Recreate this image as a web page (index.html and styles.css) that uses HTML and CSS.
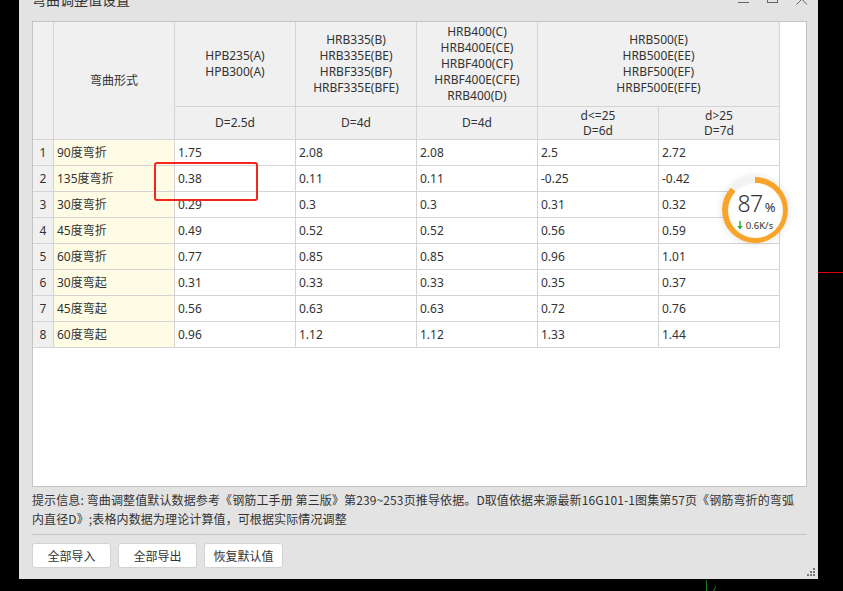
FILE: index.html
```html
<!DOCTYPE html>
<html lang="zh-CN">
<head>
<meta charset="utf-8">
<title>弯曲调整值设置</title>
<link rel="stylesheet" href="styles.css">
</head>
<body>
<div class="desktop">
  <div class="dialog">
    <div class="titlebar">
      <span class="title">弯曲调整值设置</span>
      <div class="winctrls">
        <svg class="wc" width="12" height="14" viewBox="0 0 12 14"><path d="M0 10.5H11" stroke="#666" stroke-width="1" fill="none"/></svg>
        <svg class="wc" width="12" height="14" viewBox="0 0 12 14"><rect x="0.5" y="0.5" width="10" height="10" stroke="#666" stroke-width="1" fill="none"/></svg>
        <svg class="wc" width="12" height="14" viewBox="0 0 12 14"><path d="M0.5 2L11 12.5M11 2L0.5 12.5" stroke="#666" stroke-width="1" fill="none"/></svg>
      </div>
    </div>
    <div class="grid-box">
      <table class="grid">
        <colgroup>
          <col class="c-num"><col class="c-w"><col class="c-w"><col class="c-w"><col class="c-w"><col class="c-w"><col class="c-w">
        </colgroup>
        <thead>
          <tr class="h1">
            <th rowspan="2" class="hn"></th>
            <th rowspan="2">弯曲形式</th>
            <th>HPB235(A)<br>HPB300(A)</th>
            <th>HRB335(B)<br>HRB335E(BE)<br>HRBF335(BF)<br>HRBF335E(BFE)</th>
            <th>HRB400(C)<br>HRB400E(CE)<br>HRBF400(CF)<br>HRBF400E(CFE)<br>RRB400(D)</th>
            <th colspan="2">HRB500(E)<br>HRB500E(EE)<br>HRBF500(EF)<br>HRBF500E(EFE)</th>
          </tr>
          <tr class="h2">
            <th>D=2.5d</th>
            <th>D=4d</th>
            <th>D=4d</th>
            <th class="two">d&lt;=25<br>D=6d</th>
            <th class="two">d&gt;25<br>D=7d</th>
          </tr>
        </thead>
        <tbody>
          <tr><td class="n">1</td><td class="name">90度弯折</td><td>1.75</td><td>2.08</td><td>2.08</td><td>2.5</td><td>2.72</td></tr>
          <tr><td class="n">2</td><td class="name">135度弯折</td><td>0.38</td><td>0.11</td><td>0.11</td><td>-0.25</td><td>-0.42</td></tr>
          <tr><td class="n">3</td><td class="name">30度弯折</td><td>0.29</td><td>0.3</td><td>0.3</td><td>0.31</td><td>0.32</td></tr>
          <tr><td class="n">4</td><td class="name">45度弯折</td><td>0.49</td><td>0.52</td><td>0.52</td><td>0.56</td><td>0.59</td></tr>
          <tr><td class="n">5</td><td class="name">60度弯折</td><td>0.77</td><td>0.85</td><td>0.85</td><td>0.96</td><td>1.01</td></tr>
          <tr><td class="n">6</td><td class="name">30度弯起</td><td>0.31</td><td>0.33</td><td>0.33</td><td>0.35</td><td>0.37</td></tr>
          <tr><td class="n">7</td><td class="name">45度弯起</td><td>0.56</td><td>0.63</td><td>0.63</td><td>0.72</td><td>0.76</td></tr>
          <tr><td class="n">8</td><td class="name">60度弯起</td><td>0.96</td><td>1.12</td><td>1.12</td><td>1.33</td><td>1.44</td></tr>
        </tbody>
      </table>
    </div>
    <p class="hint">提示信息: 弯曲调整值默认数据参考《钢筋工手册 第三版》第239~253页推导依据。D取值依据来源最新16G101-1图集第57页《钢筋弯折的弯弧内直径D》;表格内数据为理论计算值，可根据实际情况调整</p>
    <div class="sep"></div>
    <div class="buttons">
      <button class="btn">全部导入</button>
      <button class="btn">全部导出</button>
      <button class="btn">恢复默认值</button>
    </div>
    <div class="grip">
      <svg width="8" height="8" viewBox="0 0 8 8"><g fill="#777"><rect x="6" y="0" width="2" height="2"/><rect x="3" y="3" width="2" height="2"/><rect x="6" y="3" width="2" height="2"/><rect x="0" y="6" width="2" height="2"/><rect x="3" y="6" width="2" height="2"/><rect x="6" y="6" width="2" height="2"/></g></svg>
    </div>
  </div>

  <div class="mark"></div>

  <div class="speed">
    <div class="speed-inner">
      <div class="pct"><span class="num">87</span><span class="sym">%</span></div>
      <div class="rate">
        <svg class="arrow" width="6" height="9" viewBox="0 0 6 9"><path d="M3 0V7.5" stroke="#17b33a" stroke-width="1.4" fill="none"/><path d="M0.3 5L3 8.6L5.7 5Z" fill="#17b33a"/></svg>
        <span>0.6K/s</span>
      </div>
    </div>
  </div>

  <div class="redline"></div>
  <div class="greenline"></div>
  <div class="greenslash"></div>
</div>
</body>
</html>
```

FILE: styles.css
```css
html, body {
  margin: 0;
  padding: 0;
  background: #000;
  width: 843px;
  height: 591px;
  overflow: hidden;
}

.desktop {
  position: relative;
  width: 843px;
  height: 591px;
  overflow: hidden;
  font-family: "Noto Sans", "Noto Sans CJK SC", sans-serif;
  font-size: 12px;
  color: #333;
}

.dialog {
  position: relative;
  margin-top: -14px;
  margin-left: 19px;
  width: 799px;
  height: 593px;
  box-sizing: border-box;
  padding: 0 11px 0 13px;
  background: #e3e3e3;
  display: flex;
  flex-direction: column;
}

.titlebar {
  height: 35px;
  display: flex;
  align-items: flex-start;
}

.title {
  font-family: "Noto Sans CJK SC", sans-serif;
  font-size: 14px;
  line-height: 26px;
  color: #333;
}

.winctrls {
  margin-left: auto;
  margin-right: -1px;
  display: flex;
  gap: 17px;
  padding-top: 6px;
}

.wc {
  display: block;
}

.grid-box {
  height: 466px;
  box-sizing: border-box;
  border: 1px solid #c4c4c4;
  background: #fff;
}

.grid {
  border-collapse: separate;
  border-spacing: 0;
  table-layout: fixed;
  width: 747px;
}

.c-num { width: 21px; }
.c-w { width: 121px; }

.grid th,
.grid td {
  padding: 0;
  border-right: 1px solid #d4d4d4;
  border-bottom: 1px solid #d4d4d4;
  font-weight: normal;
  line-height: 16px;
  white-space: nowrap;
  overflow: hidden;
}

.grid th {
  background: #f0f0f0;
  text-align: center;
  color: #333;
}

.grid tr.h1 { height: 85px; }
.grid tr.h2 { height: 33px; }
.grid tr.h2 th.two { line-height: 15px; }
.grid tbody tr { height: 26px; }

.grid td {
  padding-left: 3px;
  text-align: left;
}

.grid td.n {
  background: #f0f0f0;
  padding-left: 0;
  text-align: center;
}

.grid td.name {
  background: #fffce6;
}

.hint {
  margin: 3px 0 0 0;
  width: 770px;
  line-height: 19px;
  font-family: "Noto Sans CJK SC", sans-serif;
  font-size: 12px;
  letter-spacing: 0.12px;
  color: #333;
}

.sep {
  margin-top: 6px;
  height: 1px;
  background: #c4c4c4;
}

.buttons {
  margin-top: 8px;
  display: flex;
  gap: 7px;
}

.btn {
  width: 79px;
  height: 25px;
  box-sizing: border-box;
  border: 1px solid #d2d2d2;
  border-radius: 3px;
  background: #fff;
  font-family: "Noto Sans CJK SC", sans-serif;
  font-size: 12px;
  color: #333;
  padding: 0;
  margin: 0;
}

.grip {
  position: absolute;
  right: 3px;
  bottom: 3px;
  width: 8px;
  height: 8px;
}
.grip svg { display: block; }

.mark {
  position: absolute;
  left: 154px;
  top: 162px;
  width: 104px;
  height: 39px;
  box-sizing: border-box;
  border: 2px solid #f2261f;
  border-radius: 3px;
}

.speed {
  position: absolute;
  left: 722px;
  top: 177px;
  width: 66px;
  height: 66px;
  border-radius: 50%;
  background: conic-gradient(#f8a42a 0deg 313deg, #f2f2f2 313deg 360deg);
  box-shadow: 0 0 6px 2px rgba(0, 0, 0, 0.08);
  display: flex;
  align-items: center;
  justify-content: center;
}

.speed-inner {
  width: 55px;
  height: 55px;
  border-radius: 50%;
  background: radial-gradient(circle, #fff 62%, #fff6e8 85%, #fde9cc 100%);
  display: flex;
  flex-direction: column;
  align-items: center;
  justify-content: center;
}

.pct {
  display: flex;
  align-items: baseline;
  margin-top: 2px;
  margin-left: 3px;
  line-height: 24px;
}

.num {
  font-family: "Noto Sans", sans-serif;
  font-weight: 300;
  font-size: 23px;
  color: #333;
  letter-spacing: -0.5px;
}

.sym {
  font-family: "Noto Sans", sans-serif;
  font-size: 13px;
  color: #333;
  margin-left: 2px;
}

.rate {
  font-family: "Noto Sans", sans-serif;
  font-size: 9.5px;
  line-height: 12px;
  color: #333;
  display: flex;
  align-items: center;
  margin-top: 1px;
}

.arrow {
  display: block;
  margin-right: 3px;
}

.redline {
  position: absolute;
  left: 818px;
  top: 272px;
  width: 25px;
  height: 1px;
  background: #e00000;
}

.greenline {
  position: absolute;
  left: 706px;
  top: 580px;
  width: 1px;
  height: 11px;
  background: #1a7a1a;
}

.greenslash {
  position: absolute;
  left: 714px;
  top: 586px;
  width: 1px;
  height: 6px;
  background: #1a7a1a;
  transform: rotate(30deg);
}
```
